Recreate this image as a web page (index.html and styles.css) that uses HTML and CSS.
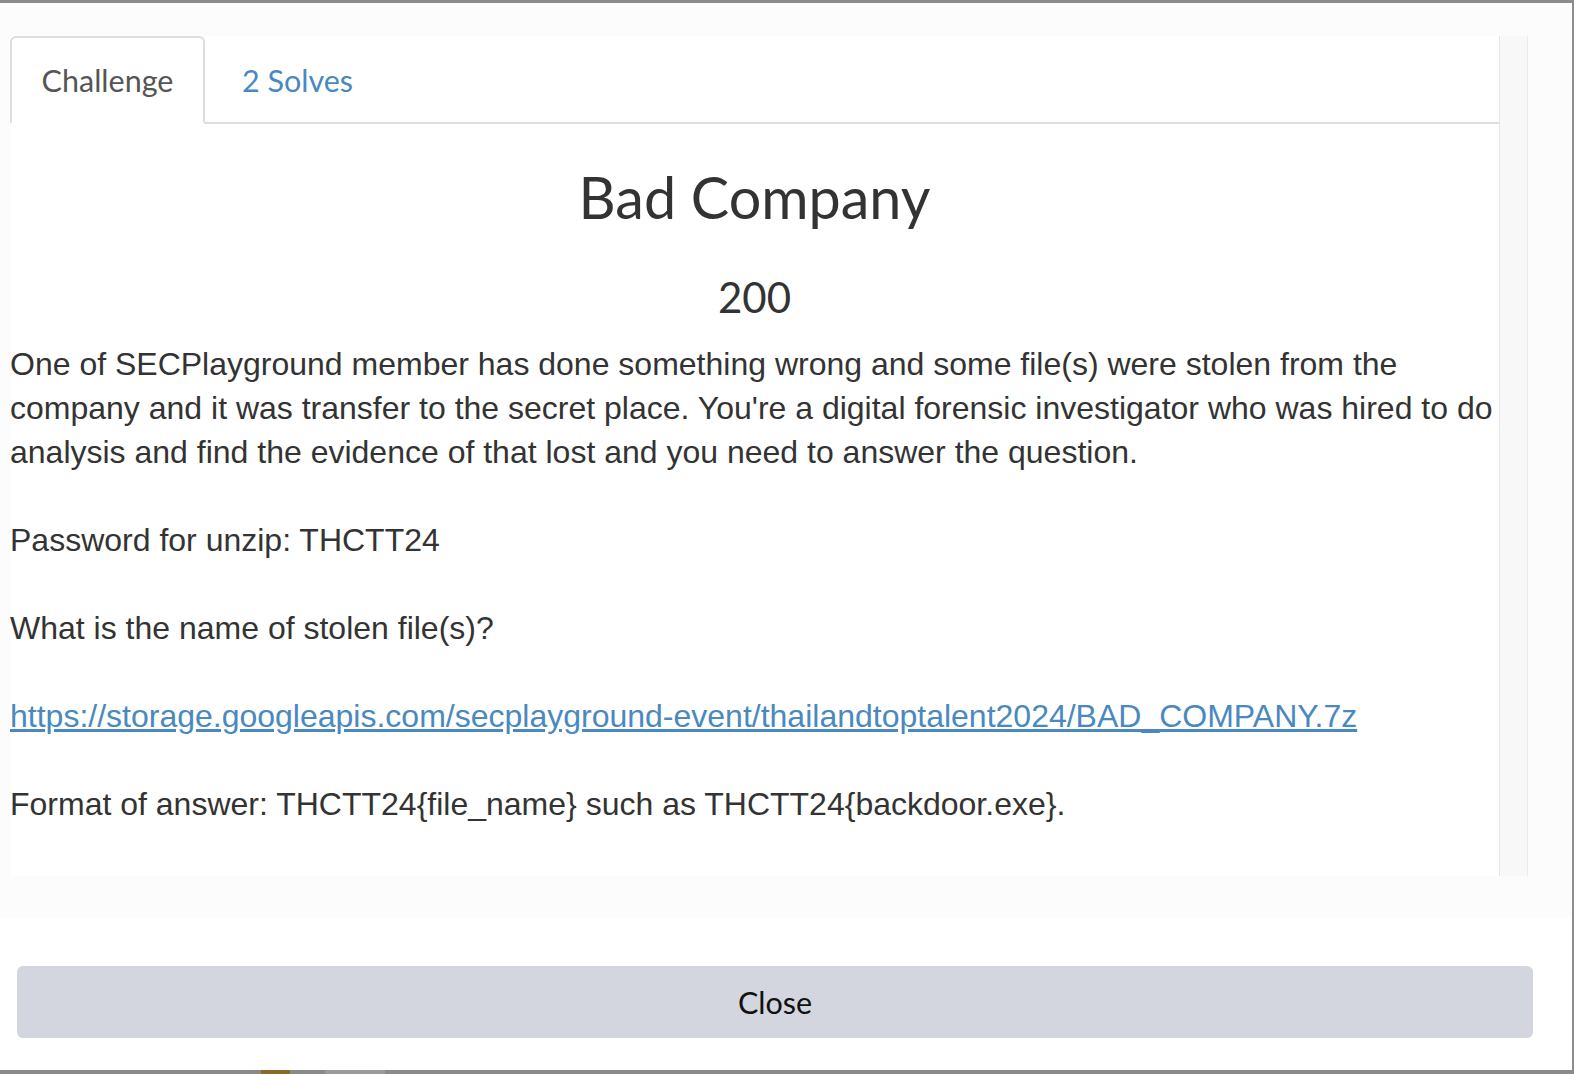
FILE: index.html
```html
<!DOCTYPE html>
<html>
<head>
<meta charset="utf-8">
<link rel="stylesheet" href="styles.css">
</head>
<body>
<div class="frame">
  <div class="modal">
    <div class="modal-body">
      <div class="scroller">
        <div class="content">
          <ul class="nav-tabs">
            <li class="tab active">Challenge</li>
            <li class="tab link">2 Solves</li>
          </ul>
          <h2 class="title">Bad Company</h2>
          <h3 class="value">200</h3>
          <div class="desc">
            <p>One of SECPlayground member has done something wrong and some file(s) were stolen from the company and it was transfer to the secret place. You're a digital forensic investigator who was hired to do analysis and find the evidence of that lost and you need to answer the question.</p>
            <p>Password for unzip: THCTT24</p>
            <p>What is the name of stolen file(s)?</p>
            <p><a href="#">https://storage.googleapis.com/secplayground-event/thailandtoptalent2024/BAD_COMPANY.7z</a></p>
            <p>Format of answer: THCTT24{file_name} such as THCTT24{backdoor.exe}.</p>
          </div>
        </div>
        <div class="scrollbar"></div>
      </div>
    </div>
    <div class="modal-footer">
      <button class="close-btn">Close</button>
    </div>
  </div>
  <div class="page-peek">
    <span class="peek-a"></span>
    <span class="peek-b"></span>
  </div>
</div>
</body>
</html>
```

FILE: styles.css
```css
html, body {
  margin: 0;
  padding: 0;
  background: #8c8c8c;
}
.frame {
  width: 1574px;
  height: 1074px;
  box-sizing: border-box;
  padding: 3px 2px 0 0;
  display: flex;
  flex-direction: column;
  overflow: hidden;
}
.modal {
  height: 1067px;
  flex: none;
  background: #fdfdfd;
  display: flex;
  flex-direction: column;
}
.modal-body {
  padding: 33px 44px 42px 10px;
  background: #fcfcfc;
  height: 915px;
  box-sizing: border-box;
  flex: none;
}
.scroller {
  display: flex;
  height: 840px;
  background: #fff;
}
.content {
  width: 1489px;
  flex: none;
  overflow: hidden;
}
.scrollbar {
  width: 27px;
  flex: none;
  background: #f8f8f8;
  border-left: 1px solid #e6e6e6;
  border-right: 1px solid #ebebeb;
}
.nav-tabs {
  list-style: none;
  margin: 0;
  padding: 0;
  display: flex;
  border-bottom: 2px solid #dddddd;
  height: 86px;
}
.tab {
  font-family: Lato, "Open Sans", sans-serif;
  font-size: 30.5px;
  line-height: 84px;
  box-sizing: border-box;
  height: 88px;
  border: 2px solid transparent;
}
.tab.active {
  color: #555;
  border-color: #dddddd;
  border-bottom-color: #fff;
  border-radius: 6px 6px 0 0;
  background: #fff;
  width: 195px;
  text-align: center;
}
.tab.link {
  color: #4a89c0;
  padding-left: 35px;
}
.title {
  font-family: Lato, "Open Sans", sans-serif;
  font-weight: 400;
  color: #333;
  font-size: 57.5px;
  line-height: 70px;
  margin: 38px 0 0;
  text-align: center;
}
.value {
  font-family: Lato, "Open Sans", sans-serif;
  font-weight: 400;
  color: #333;
  font-size: 42px;
  line-height: 50px;
  margin: 40px 0 0;
  text-align: center;
}
.desc {
  margin-top: 20px;
  font-family: "Liberation Sans", Arial, sans-serif;
  font-size: 32px;
  line-height: 44px;
  color: #333;
}
.desc p {
  margin: 0 0 44px;
}
.desc a {
  color: #4a89c0;
  text-decoration: underline;
}
.modal-footer {
  flex: 1;
  background: #fff;
  padding: 48px 39px 0 17px;
}
.close-btn {
  display: block;
  width: 100%;
  height: 72px;
  border: 0;
  border-radius: 6px;
  background: #d3d6de;
  color: #111;
  font-family: Lato, "Open Sans", sans-serif;
  font-size: 30.5px;
}
.page-peek {
  flex: 1;
  display: flex;
  background: #8a8a8a;
}
.peek-a {
  margin-left: 261px;
  width: 29px;
  background: #8a6a2c;
}
.peek-b {
  margin-left: 35px;
  width: 60px;
  background: #9a9a9a;
}
```
